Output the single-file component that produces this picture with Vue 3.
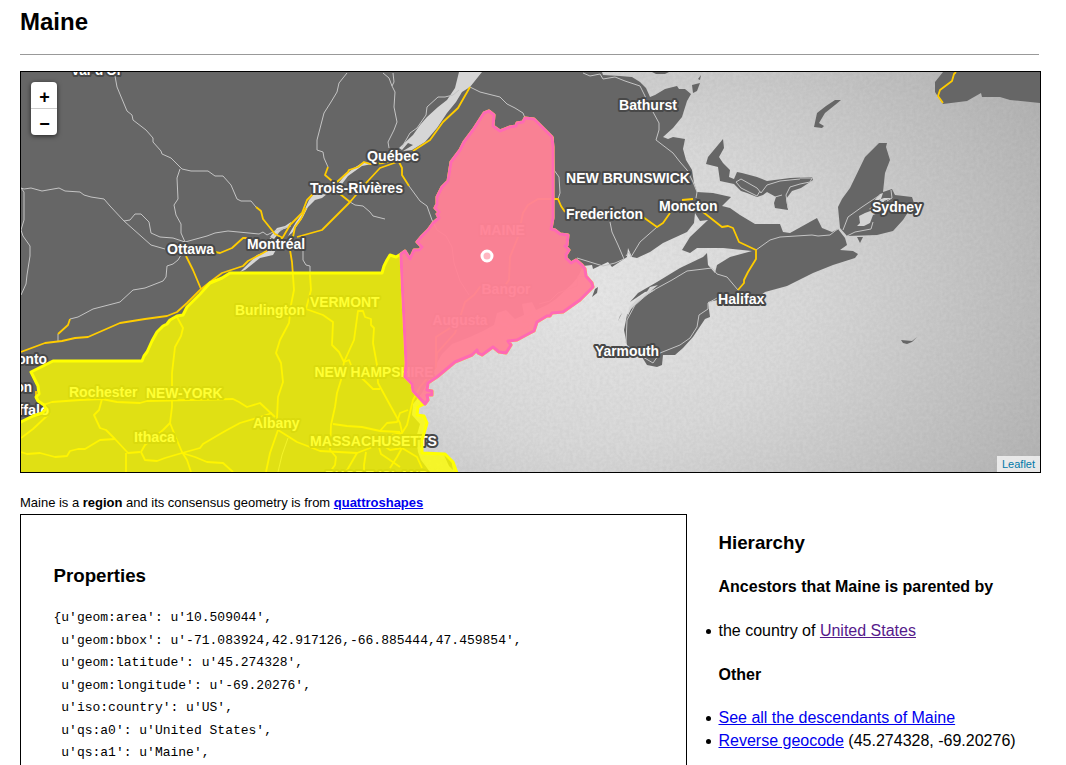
<script setup>
const water = [
  // St. Lawrence
  '459,72 482,72 470,87 462,92 456,102 447,113 437,128 425,142 412,150 403,151 413,145 408,143 402,150 399,148 413,135 420,125 427,117 438,107 447,100 455,88',
  '385,161 372,164 362,166 355,171 348,176 342,184 337,185 345,175 354,168 362,163',
  '313,195 327,194 322,198 315,200 308,207 303,217 292,233 288,236 296,222 304,211 309,200',
  '240,272 257,255 268,251 277,248 273,255 260,258 245,270',
  '270,237 277,228 285,226 291,222 290,227 281,230 274,239'
]

const land = [
  // mainland down to New England, New Brunswick and Nova Scotia
  '21,72 602,72 603,75 620,76 632,77 640,82 646,88 650,97 655,95 665,89 677,86 679,89 685,89 691,94 687,101 682,117 673,128 663,137 668,139 673,137 685,139 683,149 686,160 692,170 694,183 697,192 713,193 731,197 722,206 730,208 740,215 755,224 780,224 783,232 790,233 817,218 822,228 832,232 838,229 845,238 847,245 840,250 853,251 858,254 855,258 833,265 813,273 787,286 765,292 747,305 740,306 718,300 708,302 710,317 705,319 693,337 683,348 675,355 663,355 662,365 657,367 647,365 642,357 627,345 624,330 627,315 635,303 647,295 655,290 645,292 630,302 638,293 657,282 680,268 703,257 707,253 708,265 715,273 717,265 730,257 752,251 723,248 697,248 690,253 682,250 690,237 708,220 700,221 695,213 694,223 687,232 663,243 650,252 637,258 632,257 628,248 627,257 612,267 608,262 593,269 592,265 583,266 578,277 572,284 556,299 547,305 536,310 532,302 522,304 524,315 515,319 506,310 497,313 494,325 483,331 470,337 452,344 442,354 435,366 430,377 422,393 413,404 412,415 420,424 416,438 418,452 421,460 430,472 21,472',
  // Cape Breton
  '879,143 887,143 886,147 890,160 885,173 883,192 892,189 895,195 912,197 914,203 903,220 893,231 877,235 847,236 840,228 838,207 842,199 850,188 865,157',
  // Prince Edward Island
  '723,139 724,148 719,157 723,163 730,170 729,177 734,179 737,172 742,173 757,177 767,181 790,178 812,177 813,180 801,188 792,191 786,199 788,210 775,208 774,203 776,197 767,192 763,195 757,197 747,193 741,191 734,184 720,181 718,167 706,164 708,157',
  '943,72 935,82 935,92 943,104 967,101 981,93 982,97 1000,97 1010,100 1040,103 1040,72',
  '835,100 841,100 835,105 825,113 819,123 824,126 822,128 814,127 817,113 826,106',
  '692,85 700,83 697,91 693,93', '701,75 700,80 698,79', '652,72 669,72 665,74 656,74',
  '857,237 863,237 860,243', '901,340 912,341 917,337 912,342 907,344 903,343',
  '595,289 598,287 597,293 592,297', '622,313 618,321 620,316', '444,455 451,459 453,470 449,466'
]

const inlets = [
  '880,194 883,193 881,199 876,204 869,209 873,210 865,213 859,216 860,223 857,226 864,226 870,223 873,215 881,212 884,201 892,198 884,198 873,202',
  '650,287 658,285 645,296 631,309 627,318 629,308 637,299 646,293'
]

const minor = [
  '115,76 117,87 127,111 132,115 133,120 146,130 153,138 153,142 161,151 162,154 171,158 182,169 191,171 208,171 215,176 223,176 231,185 237,199 241,201 251,201 256,207',
  '180,169 177,178 178,199 174,205 176,215 181,224 181,233 185,242',
  '21,188 24,189 31,188 42,191 59,188 65,191 80,192 84,195 91,197 104,199 110,206 124,221 151,245 165,249',
  '124,221 130,220 135,214 141,214 149,222 151,233 160,237 173,238 185,242 207,236 215,233 228,231 259,234 263,232 267,235 275,231 288,227',
  '21,188 24,192 24,220 21,230 23,236 30,246 30,256 27,275 26,284 21,295',
  '181,255 178,260 173,264 167,266 166,277 163,281 145,288 133,290 120,302 93,309 78,317 70,319',
  '58,334 58,342', '266,242 275,235 284,228 291,226',
  '347,73 339,83 337,92 331,102 324,113 317,140 317,150 323,152 324,158 328,167',
  '350,202 355,205 363,206 370,212 373,216 385,219',
  '383,73 389,78 392,86 395,92 394,107 397,122 394,130 388,142 389,148', '393,73 394,82 392,86',
  '459,90 453,95 445,97 438,97 427,107 426,115 417,128 410,133 402,147',
  '470,87 480,92 500,97 507,104 515,108 523,113 525,118',
  '409,186 420,201 427,206 432,220 437,230 446,236 452,247 454,263 460,281 469,295',
  '583,73 590,76 600,74 603,79 615,77 625,81 640,86 645,96 647,102 653,112 659,123 659,130 656,140 673,153 680,162 687,170 693,182 697,192 696,198',
  '553,137 554,170 559,177 560,193 558,199',
  '610,222 612,232 618,245 624,259', '657,227 640,242 631,257 629,252 626,256',
  '577,258 590,262 603,266 615,263 624,259',
  '756,250 770,240 780,237 812,235 818,236 830,235 835,231 838,229',
  '738,290 727,277 717,274 712,268 687,271 672,280 650,292 635,305 627,320 626,343',
  '717,298 708,303 708,309 699,315 697,327 690,338 680,345 660,353 653,363 643,357',
  '843,230 848,217 862,207 880,195', '847,236 855,232 871,229 873,222', '887,201 892,198 891,190',
  '800,178 812,178 810,182 800,184 790,187 786,195 788,208', '736,182 741,179 757,188 761,193 767,185 780,181 800,179',
  '736,182 741,188 757,196 760,191', '775,197 782,195', '584,277 578,276 577,286 558,293 550,301 539,304',
  '303,250 303,260 306,265 310,266 310,275', '288,438 282,455 278,472'
]

const major = [
  '256,207 261,211 263,219 275,234 283,238',
  '70,319 68,325 58,334',
  '21,352 45,343 62,341 75,338 88,337 104,330 120,323 145,319 167,316 177,312 187,303 200,290 210,282 222,273 243,266 248,261 263,253 275,246 283,237 290,225 302,213 307,200 313,194',
  '186,256 193,270 201,289', '215,252 220,253 232,248 243,238 248,238',
  '337,182 348,172 349,170 358,167 364,162 370,164 383,163 398,159',
  '293,237 295,227 301,219 306,208', '297,237 322,230 350,202 367,182 380,168 397,162',
  '413,151 430,140 443,122 458,108 470,87', '399,162 402,168 402,175 409,186',
  '328,167 325,175 332,181', '340,194 350,202',
  '290,250 292,262 294,290 291,305 289,323 280,340 276,353 281,363 283,382 278,397 277,418 278,430 270,453 266,472',
  '310,275 311,290 306,309 323,315 333,322 332,345 339,352 344,362 341,380 337,393 335,407 331,425 330,450 336,457 335,465 330,472',
  '344,362 354,340 358,311 363,311 365,317 371,319 371,325 374,328 373,343 377,365 378,383 390,405 400,423 402,432',
  '344,362 349,360 353,370 367,383 373,389 380,389',
  '43,405 52,402 80,400 102,399 117,402 140,403 147,401 233,399 239,402 247,407 260,403 275,417',
  '21,438 33,429 50,413', '182,453 200,448 203,444 220,434 227,430 240,423 260,417 272,413',
  '278,430 297,442 310,447 320,451 357,453 370,448 380,443 392,435 402,433 407,425 413,400 420,387 436,367 436,337 450,328',
  '333,424 347,426 362,427 380,431 400,432', '380,431 387,423 397,422 400,413 408,410',
  '366,452 364,465 364,472', '357,453 346,472', '378,444 381,454 387,458 400,467', '402,448 397,457 390,468',
  '380,443 390,450 402,448 417,457 422,468',
  '177,317 183,328 181,336 175,347 172,373 172,407 170,423 176,438 182,452 187,460 191,472',
  '170,423 163,430 145,445 141,452 145,460 157,461 165,458 182,453 195,457 207,462 223,463 233,472',
  '102,399 99,410 94,415 100,428 106,430 115,439 128,453 140,452', '126,453 126,472',
  '21,452 27,454 40,453 55,457 67,456 70,451 78,449 85,449 100,440 115,439',
  '565,212 561,206 558,199 538,199 528,205 523,213 518,237 510,257 509,280 504,287 480,287 474,295 465,302 455,333 437,353 436,367',
  '643,217 657,227 663,223 670,213', '682,200 693,199',
  '703,212 722,227 728,226 733,228 739,242 756,250 756,259 748,272 744,280 744,283 738,290',
  '956,72 954,74 952,81 940,90 938,96 943,103', '36,391 36,398 41,403'
]

const maine = '401,254 405,251 410,259 414,250 419,250 422,247 417,242 422,236 428,230 433,223 439,218 437,214 439,212 435,208 437,204 437,197 442,187 448,181 451,162 460,150 464,142 473,130 484,113 489,111 494,115 493,126 500,131 510,127 516,126 517,123 523,122 525,118 534,119 543,128 552,137 553,147 553,218 551,229 555,230 560,234 568,235 567,245 565,246 569,250 566,255 566,258 571,263 576,260 582,265 585,269 586,276 592,283 593,287 580,300 563,312 552,313 550,316 547,316 537,322 534,331 530,333 517,340 508,341 511,345 506,353 499,352 493,347 482,355 478,353 477,350 472,355 455,362 437,377 428,383 427,390 432,391 432,395 427,395 428,400 425,404 413,391 412,384 405,377 406,363 404,320 402,280'
const states = '21,422 33,416 42,413 46,409 44,405 38,401 36,397 39,394 38,386 31,372 53,361 142,361 144,356 147,352 152,341 157,332 163,326 167,324 170,320 177,316 183,315 187,307 200,294 210,283 222,278 230,273 382,273 384,266 387,260 390,255 396,257 401,254 402,280 404,320 406,363 405,377 412,384 413,391 424,404 418,407 417,415 424,416 427,423 422,440 422,453 445,454 453,462 457,473 457,480 15,480 15,424'

// [text, x, baseline, drawn width]
const labels = [
  ["Val-d'Or", 71, 75, 51], ['Ottawa', 167, 254, 47], ['Montréal', 247, 248.5, 58], ['Québec', 367, 160.5, 52],
  ['Trois-Rivières', 310, 193, 93], ['Bathurst', 619, 109.5, 58], ['NEW BRUNSWICK', 566, 182.5, 124],
  ['Fredericton', 566, 219, 77], ['Moncton', 659, 210.5, 58.5], ['Sydney', 872, 212, 50], ['Halifax', 718, 303.5, 46.5],
  ['Yarmouth', 595, 355.5, 64], ['Burlington', 235, 314.5, 70], ['VERMONT', 310, 306.5, 69.5], ['Rochester', 69, 396.5, 68.5],
  ['NEW-YORK', 146, 397.5, 76.5], ['Ithaca', 134, 442, 41], ['Albany', 253, 428, 46.5], ['NEW HAMPSHIRE', 314.5, 377, 119],
  ['MASSACHUSETTS', 310, 445.5, 127], ['RHODE ISLAND', 325, 480.5, 104], ['MAINE', 479.5, 234.5, 45.5],
  ['Bangor', 481.5, 294, 49], ['Augusta', 432.5, 325, 55], ['Toronto', -4, 363.5, 51], ['Hamilton', -26, 391.5, 58], ['Buffalo', -1, 414.5, 50]
]

const props = `{u'geom:area': u'10.509044',
 u'geom:bbox': u'-71.083924,42.917126,-66.885444,47.459854',
 u'geom:latitude': u'45.274328',
 u'geom:longitude': u'-69.20276',
 u'iso:country': u'US',
 u'qs:a0': u'United States',
 u'qs:a1': u'Maine',
 u'qs:a1_lc': u'US23',`
</script>

<template>
  <div class="page">
    <h1>Maine</h1>
    <hr />
    <div class="map">
      <svg class="tiles" viewBox="21 72 1019 400" width="1019" height="400">
        <defs>
          <radialGradient id="sea" gradientUnits="userSpaceOnUse" cx="0" cy="0" r="1" gradientTransform="translate(590 290) scale(540 390)">
            <stop offset="0" stop-color="#e6e6e6" />
            <stop offset=".4" stop-color="#d8d8d8" />
            <stop offset="1" stop-color="#b0b0b0" />
          </radialGradient>
          <filter id="grain" x="0" y="0" width="100%" height="100%">
            <feTurbulence type="fractalNoise" baseFrequency=".3" numOctaves="2" seed="4" />
            <feColorMatrix values="0 0 0 0 0  0 0 0 0 0  0 0 0 0 0  .25 0 0 0 -.07" />
          </filter>
        </defs>
        <rect x="21" y="72" width="1019" height="400" fill="url(#sea)" />
        <rect x="21" y="72" width="1019" height="400" filter="url(#grain)" opacity=".25" />
        <polygon v-for="p in land" :key="p" :points="p" class="land" />
        <polygon v-for="p in water" :key="p" :points="p" class="river" />
        <polygon v-for="p in inlets" :key="p" :points="p" class="inlet" />
        <polyline v-for="p in minor" :key="p" :points="p" class="minor" />
        <polyline v-for="p in major" :key="p" :points="p" class="major" />
        <text v-for="l in labels" :key="l[0]" :x="l[1]" :y="l[2]" :textLength="l[3]" lengthAdjust="spacingAndGlyphs" class="label">{{ l[0] }}</text>
        <polygon :points="states" class="states" />
        <polygon :points="maine" class="states" />
        <polygon :points="maine" class="maine" />
        <circle cx="487" cy="256" r="5" class="marker" />
      </svg>
      <div class="zoom"><a>+</a><a>−</a></div>
      <div class="credit">Leaflet</div>
    </div>
    <p class="about">Maine is a <b>region</b> and its consensus geometry is from <a class="link"><b>quattroshapes</b></a></p>
    <div class="columns">
      <section class="properties">
        <h3>Properties</h3>
        <pre>{{ props }}</pre>
      </section>
      <section class="hierarchy">
        <h3>Hierarchy</h3>
        <h4>Ancestors that Maine is parented by</h4>
        <ul>
          <li>the country of <a class="link visited">United States</a></li>
        </ul>
        <h4 class="other">Other</h4>
        <ul class="last">
          <li><a class="link">See all the descendants of Maine</a></li>
          <li><a class="link">Reverse geocode</a> (45.274328, -69.20276)</li>
        </ul>
      </section>
    </div>
  </div>
</template>

<style>
body { background: #fff; overflow: hidden; }
</style>

<style scoped>
.page { height: 765px; overflow: hidden; padding: 0 20px; box-sizing: border-box; font-family: "Liberation Sans", Arial, sans-serif; color: #000; }
h1, h3, h4, p, ul, pre { margin: 0; padding: 0; }
h1 { font-size: 24px; line-height: 44px; }
hr { width: 1019px; border: 0; border-top: 1px solid #999; margin: 10px 0 16px; }
.map { position: relative; width: 1019px; height: 400px; border: 1px solid #000; overflow: hidden; }
.tiles { display: block; }
.land { fill: #666; }
.river { fill: #d6d6d6; }
.inlet { fill: #d4d4d4; }
.minor { fill: none; stroke: #c4c4c4; stroke-width: 1; }
.major { fill: none; stroke: #fc0; stroke-width: 1.8; stroke-linejoin: round; }
.label { font: bold 14px "Liberation Sans", Arial, sans-serif; fill: #fff; stroke: #484848; stroke-width: 4px; stroke-linejoin: round; paint-order: stroke; }
.states { fill: #ff0; fill-opacity: .8; stroke: #ff0; stroke-width: 3; stroke-linejoin: round; }
.maine { fill: #ff69b4; fill-opacity: .8; stroke: #ff69b4; stroke-width: 3; stroke-linejoin: round; }
.marker { fill: #ffb6c1; stroke: #fff; stroke-width: 3; }
.zoom { position: absolute; left: 10px; top: 10px; width: 26px; border-radius: 4px; background: #fff; box-shadow: 0 1px 5px rgba(0, 0, 0, .65); }
.zoom a { display: block; height: 26px; line-height: 31px; text-align: center; font-weight: bold; font-size: 18px; text-indent: 1px; }
.zoom a:first-child { border-bottom: 1px solid #ccc; }
.credit { position: absolute; right: 0; bottom: 0; width: 43px; height: 16px; line-height: 16px; text-align: center; font-size: 11px; color: #0078a8; background: rgba(255, 255, 255, .7); }
.about { margin-top: 20px; font-size: 13px; line-height: 20px; letter-spacing: -.01px; }
.link { color: #00e; text-decoration: underline; }
.visited { color: #551a8b; }
.columns { display: flex; margin-top: 1px; gap: 31.5px; }
.properties { width: 667px; height: 300px; box-sizing: border-box; border: 1px solid #000; padding: 47px 32px 0 32.5px; }
h3 { font-size: 18.72px; line-height: 28px; }
pre { margin-top: 17px; font: 13px/22.5px "Liberation Mono", "Courier New", monospace; }
.hierarchy { padding-top: 15px; }
h4 { font-size: 16px; line-height: 22px; margin-top: 19px; }
ul { list-style: none; margin-top: 21px; font-size: 16px; line-height: 23px; }
li { position: relative; }
li::before { content: ""; position: absolute; left: -13px; top: 10px; width: 5px; height: 5px; border-radius: 50%; background: #000; }
.other { margin-top: 22px; }
.last { margin-top: 20px; }
</style>
